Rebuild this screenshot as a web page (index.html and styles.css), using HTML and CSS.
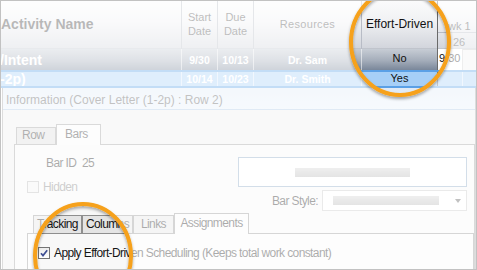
FILE: index.html
```html
<!DOCTYPE html>
<html>
<head>
<meta charset="utf-8">
<link rel="stylesheet" href="styles.css">
</head>
<body>
<div class="screen">
  <div class="grid">
    <div class="ghead">
      <div class="hc c-act">Activity Name</div>
      <div class="hc">Start<br>Date</div>
      <div class="hc">Due<br>Date</div>
      <div class="hc c-res">Resources</div>
      <div class="hc c-eff">Effort-Driven</div>
      <div class="hc c-wk"><div class="wk-top">wk 1</div><div class="wk-bot">26</div></div>
    </div>
    <div class="grow r1">
      <div class="gc c-act">/Intent</div>
      <div class="gc">9/30</div>
      <div class="gc">10/13</div>
      <div class="gc">Dr. Sam</div>
      <div class="gc c-eff">No</div>
      <div class="gc c-day">9/30</div>
      <div class="gc c-last"></div>
    </div>
    <div class="grow r2">
      <div class="gc c-act">-2p)</div>
      <div class="gc">10/14</div>
      <div class="gc">10/23</div>
      <div class="gc">Dr. Smith</div>
      <div class="gc c-eff">Yes</div>
      <div class="gc c-day"></div>
      <div class="gc c-last"></div>
    </div>
  </div>
  <div class="dialog">
    <div class="dtitle">Information (Cover Letter (1-2p) : Row 2)</div>
    <div class="dbody">
      <div class="otabs">
        <div class="otab">Row</div>
        <div class="otab sel">Bars</div>
      </div>
      <div class="panel">
        <div class="top">
          <div class="left">
            <div class="barid">Bar ID&nbsp; 25</div>
            <div class="chk dis"><span class="box"></span><span>Hidden</span></div>
          </div>
          <div class="right">
            <div class="textarea"><span class="gbar"></span></div>
            <div class="stylerow">
              <span class="lbl">Bar Style:</span>
              <div class="select"><span class="gbar sbar"></span><span class="arrow"></span></div>
            </div>
          </div>
        </div>
        <div class="itabs">
          <div class="itab t1">Tracking</div>
          <div class="itab t2">Columns</div>
          <div class="itab t3">Links</div>
          <div class="itab t4 sel">Assignments</div>
        </div>
        <div class="ipanel">
          <div class="chk"><span class="box checked"><svg width="10" height="10" viewBox="0 0 10 10"><path d="M2 5.2 L4 7.6 L8.2 2.2" fill="none" stroke="#3f4f93" stroke-width="1.7"/></svg></span><span>Apply Effort-Driven Scheduling (Keeps total work constant)</span></div>
        </div>
      </div>
    </div>
  </div>
  <svg class="fade" width="477" height="270" viewBox="0 0 477 270">
    <defs>
      <filter id="sh" x="-20%" y="-20%" width="140%" height="140%">
        <feDropShadow dx="0" dy="2" stdDeviation="1.6" flood-color="#000" flood-opacity="0.35"/>
      </filter>
    </defs>
    <path fill="#fff" fill-opacity="0.64" fill-rule="evenodd" d="M0 0H477V270H0Z M351 42a49 53 0 1 0 98 0a49 53 0 1 0 -98 0Z M35 256a48 52 0 1 0 96 0a48 52 0 1 0 -96 0Z"/>
    <ellipse cx="400" cy="42" rx="49" ry="53" fill="none" stroke="#f6a11a" stroke-width="4" filter="url(#sh)"/>
    <ellipse cx="83" cy="256" rx="48" ry="52" fill="none" stroke="#f6a11a" stroke-width="4" filter="url(#sh)"/>
  </svg>
  <div class="frame"></div>
</div>
</body>
</html>
```
FILE: styles.css
```css
* { box-sizing: border-box; margin: 0; padding: 0; }
html, body { width: 477px; height: 270px; overflow: hidden; background: #fff; }
body { font-family: "Liberation Sans", Arial, sans-serif; }

.screen { position: relative; width: 477px; height: 270px; overflow: hidden; display: flex; flex-direction: column; }

.ghead, .grow { display: grid; grid-template-columns: 182px 36px 36px 108px 76px 25px 14px; }

.ghead { height: 49px; background: linear-gradient(#fbfbfc, #f0f1f3 45%, #d2d5dc); border-bottom: 1px solid #c0c4cc; }
.hc { border-right: 1px solid #b8bcc6; display: flex; align-items: center; justify-content: center; text-align: center; color: #4a4a4a; font-size: 11px; line-height: 13.5px; }
.ghead .c-act { justify-content: flex-start; padding-left: 1px; font-weight: bold; font-size: 14px; color: #3c3c3c; }
.ghead .c-res { letter-spacing: 0.3px; }
.ghead .c-eff { color: #111; font-size: 12px; border-right-color: #6a6a6a; }
.c-wk { grid-column: span 2; flex-direction: column; align-items: stretch; justify-content: flex-start; text-align: left; border-right: none; }
.wk-top { height: 33px; border-bottom: 1px solid #b8bcc6; padding: 20px 0 0 10px; line-height: 13px; }
.wk-bot { padding: 3px 0 0 15px; line-height: 13px; }

.grow { color: #fff; font-weight: bold; font-size: 10.5px; }
.gc { border-right: 1px solid rgba(255,255,255,0.55); display: flex; align-items: center; justify-content: center; white-space: nowrap; overflow: hidden; }
.grow .c-act { justify-content: flex-start; font-size: 14px; }
.r1 { height: 21px; background: linear-gradient(#c7cdd5, #a4adba 55%, #7a879a); }
.r2 { height: 18px; background: #a6cff7; border-top: 2px solid #5aa0e6; border-bottom: 2px solid #5aa0e6; }
.grow .c-eff { color: #111; font-weight: normal; font-size: 11px; border-right: 1px solid #6a6a6a; }
.r1 .c-eff { padding-bottom: 4px; }
.r2 .c-eff { padding-bottom: 3px; }
.r1 .c-day { background: #fff; color: #111; font-weight: normal; font-size: 11px; justify-content: flex-start; padding: 0 0 4px 1px; border-right-color: #d0d0d0; }
.r1 .c-last { background: #f2f2f2; border-top: 1px solid #c8c8c8; }

.dialog { flex: 1; display: flex; flex-direction: column; margin: 0 1px 0 2px; border-left: 1px solid #a0a0a0; border-right: 1px solid #a0a0a0; }
.dtitle { height: 22px; padding: 5px 0 0 3px; line-height: 15px; font-size: 12px; color: #585858; background: linear-gradient(#dfeaf6, #e8f0f9); border-bottom: 1px solid #a8c4e4; white-space: nowrap; }
.dbody { flex: 1; display: flex; flex-direction: column; background: #eeeeee; padding: 14px 0 0 11px; }

.otabs { display: flex; align-items: flex-end; height: 20px; margin-left: 2px; }
.otab { height: 17px; width: 40px; padding-left: 5px; border: 1px solid #9a9a9a; border-bottom: none; background: #dcdcdc; color: #262626; font-size: 12px; letter-spacing: -0.5px; line-height: 15px; }
.otab.sel { height: 21px; width: 45px; padding-left: 8px; margin-bottom: -1px; background: #f9f9f9; line-height: 19px; position: relative; z-index: 1; }

.panel { flex: 1; display: flex; flex-direction: column; border: 1px solid #9a9a9a; border-bottom: none; background: #f7f7f7; padding: 12px 0 0 12px; font-size: 12px; letter-spacing: -0.6px; color: #151515; }
.top { display: grid; grid-template-columns: 211px 229px; }
.left { display: flex; flex-direction: column; }
.barid { margin-left: 19px; height: 12px; line-height: 12px; white-space: nowrap; }
.chk { display: flex; align-items: center; gap: 4px; height: 12px; white-space: nowrap; }
.left .chk { margin-top: 12px; }
.box { width: 12px; height: 12px; border: 1px solid #747474; background: linear-gradient(#ececec, #fff); display: flex; align-items: center; justify-content: center; flex: none; }
.chk.dis { color: #777; }
.chk.dis .box { border-color: #b4b4b4; background: #f2f2f2; }
.right { display: flex; flex-direction: column; }
.textarea { height: 30px; border: 1px solid #86a4c2; background: #fff; display: flex; align-items: center; justify-content: center; }
.gbar { display: block; width: 115px; height: 9px; background: linear-gradient(#d2d2d2, #b4b4b4); }
.stylerow { margin-top: 3px; height: 21px; display: flex; justify-content: flex-end; align-items: center; gap: 4px; }
.select { width: 145px; height: 21px; border: 1px solid #c4c4c4; background: #fff; display: flex; align-items: center; padding-left: 10px; }
.sbar { width: 106px; }
.arrow { margin-left: auto; margin-right: 5px; width: 0; height: 0; border-left: 3.5px solid transparent; border-right: 3.5px solid transparent; border-top: 4px solid #555; }

.itabs { display: flex; align-items: flex-end; height: 20px; margin: 2px 0 0 6px; }
.itab { height: 18px; border: 1px solid #8e8e8e; border-bottom: none; background: #e4e4e4; text-align: center; line-height: 17px; white-space: nowrap; }
.t1 { width: 49px; }
.t2 { width: 51px; }
.t3 { width: 41px; }
.t4 { width: 75px; }
.itab.sel { height: 21px; margin-bottom: -1px; background: #f9f9f9; line-height: 18px; position: relative; z-index: 1; }
.ipanel { flex: 1; border: 1px solid #8e8e8e; border-bottom: none; background: #f8f8f8; padding: 13px 0 0 10px; }

.fade { position: absolute; left: 0; top: 0; z-index: 5; pointer-events: none; }
.frame { position: absolute; inset: 0; z-index: 6; border: 1px solid #c2c2c2; pointer-events: none; }
```
